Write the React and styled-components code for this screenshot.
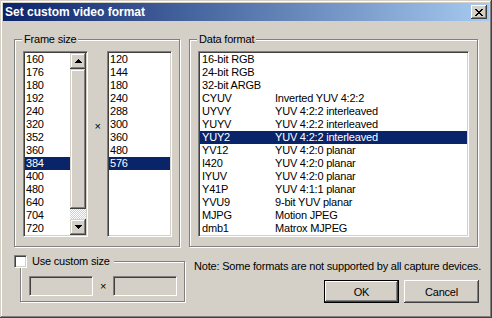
import React from 'react'
import styled, { createGlobalStyle } from 'styled-components'

const GlobalStyle = createGlobalStyle`
  html, body {
    margin: 0;
    padding: 0;
    background: #d4d0c8;
  }

  body {
    font-family: "Liberation Sans", Arial, sans-serif;
    font-size: 11px;
    letter-spacing: -0.2px;
    color: #000;
  }
`

const raised = `
  box-shadow: inset -1px -1px #404040, inset 1px 1px #d4d0c8,
    inset -2px -2px #808080, inset 2px 2px #fff;
`

const sunken = `
  border: 1px solid;
  border-color: #808080 #fff #fff #808080;
  box-shadow: inset 1px 1px #404040, inset -1px -1px #d4d0c8;
`

const Window = styled.div`
  box-sizing: border-box;
  width: 492px;
  height: 318px;
  padding: 3px;
  background: #d4d0c8;
  display: flex;
  flex-direction: column;
  ${raised}
`

const TitleBar = styled.div`
  height: 18px;
  display: flex;
  align-items: center;
  justify-content: space-between;
  padding: 0 2px;
  background: linear-gradient(to right, #0a246a, #a6caf0);
  color: #fff;
  font-weight: bold;
  font-size: 12px;
  letter-spacing: 0;
`

const CloseButton = styled.div`
  box-sizing: border-box;
  width: 16px;
  height: 14px;
  display: flex;
  align-items: center;
  justify-content: center;
  background: #d4d0c8;
  box-shadow: inset -1px -1px #404040, inset 1px 1px #fff,
    inset -2px -2px #808080, inset 2px 2px #d4d0c8;
`

const Body = styled.div`
  flex: 1;
  display: flex;
  flex-direction: column;
  padding: 18px 0 0 11px;
`

const TopRow = styled.div`
  display: flex;
  gap: 9px;
`

const Group = styled.div`
  position: relative;
  box-sizing: border-box;
  width: ${p => p.$w}px;
  height: ${p => p.$h}px;
  border: 1px solid #808080;
  box-shadow: 1px 1px 0 #fff, inset 1px 1px 0 #fff;
  padding: ${p => p.$pad};
  display: flex;
  align-items: flex-start;
`

const Legend = styled.span`
  position: absolute;
  top: -7px;
  left: 7px;
  padding: 0 2px;
  line-height: 13px;
  background: #d4d0c8;
`

const ListBox = styled.div`
  box-sizing: border-box;
  width: ${p => p.$w}px;
  height: 186px;
  padding: 1px;
  background: #fff;
  display: flex;
  ${sunken}
`

const Items = styled.div`
  flex: 1;
  min-width: 0;
`

const Row = styled.div`
  height: 13px;
  line-height: 13px;
  padding-left: ${p => p.$indent}px;
  white-space: nowrap;
  background: ${p => (p.$selected ? '#0a246a' : 'transparent')};
  color: ${p => (p.$selected ? '#fff' : '#000')};
`

const FormatRow = styled(Row)`
  display: grid;
  grid-template-columns: 73px 1fr;
`

const ScrollBar = styled.div`
  width: 16px;
  display: flex;
  flex-direction: column;
`

const ScrollButton = styled.div`
  height: 16px;
  display: flex;
  align-items: center;
  justify-content: center;
  background: #d4d0c8;
  ${raised}
`

const Thumb = styled.div`
  height: 140px;
  background: #d4d0c8;
  ${raised}
`

const Track = styled.div`
  flex: 1;
  background-image: conic-gradient(#fff 25%, #d4d0c8 0 50%, #fff 0 75%, #d4d0c8 0);
  background-size: 2px 2px;
`

const Times = styled.span`
  width: ${p => p.$w}px;
  text-align: center;
  line-height: 13px;
  margin-top: ${p => p.$top}px;
`

const BottomRow = styled.div`
  display: flex;
  margin-top: 8px;
`

const CustomSection = styled.div`
  width: 171px;
`

const CustomGroup = styled(Group)`
  margin: 6px 0 0 6px;
  padding: 9px 0 0 8px;
  align-items: center;
`

const CheckLegend = styled.label`
  position: absolute;
  top: -7px;
  left: -7px;
  display: flex;
  align-items: center;
  gap: 5px;
  padding-right: 4px;
  line-height: 13px;
  background: #d4d0c8;
`

const CheckBox = styled.span`
  box-sizing: border-box;
  width: 13px;
  height: 13px;
  background: #fff;
  ${sunken}
`

const Edit = styled.div`
  box-sizing: border-box;
  width: 64px;
  height: 20px;
  background: #d4d0c8;
  ${sunken}
`

const RightSection = styled.div`
  flex: 1;
  margin-left: 9px;
  display: flex;
  flex-direction: column;
`

const Note = styled.div`
  margin-top: 5px;
  line-height: 13px;
  white-space: nowrap;
`

const Buttons = styled.div`
  display: flex;
  justify-content: flex-end;
  gap: 5px;
  margin-top: 7px;
  padding-right: 10px;
`

const Button = styled.button`
  box-sizing: border-box;
  width: 75px;
  height: 23px;
  padding: 0;
  font: inherit;
  letter-spacing: inherit;
  color: #000;
  background: #d4d0c8;
  border: ${p => (p.$default ? '1px solid #000' : 'none')};
  box-shadow: inset -1px -1px #404040, inset 1px 1px #fff,
    inset -2px -2px #808080, inset 2px 2px #d4d0c8;
`

const PixelIcon = ({ rows }) => (
  <svg width={rows[0].length} height={rows.length} shapeRendering='crispEdges'>
    {rows.map((r, y) =>
      r.split('').map((c, x) =>
        c === '#' ? <rect key={`${x}-${y}`} x={x} y={y} width='1' height='1' fill='#000' /> : null
      )
    )}
  </svg>
)

const closeGlyph = [
  '##....##',
  '.##..##.',
  '..####..',
  '...##...',
  '..####..',
  '.##..##.',
  '##....##'
]

const upGlyph = ['...#...', '..###..', '.#####.', '#######']
const downGlyph = [...upGlyph].reverse()

const frameWidths = ['160', '176', '180', '192', '240', '320', '352', '360', '384', '400', '480', '640', '704', '720']
const frameHeights = ['120', '144', '180', '240', '288', '300', '360', '480', '576']
const formats = [
  ['16-bit RGB', ''],
  ['24-bit RGB', ''],
  ['32-bit ARGB', ''],
  ['CYUV', 'Inverted YUV 4:2:2'],
  ['UYVY', 'YUV 4:2:2 interleaved'],
  ['YUYV', 'YUV 4:2:2 interleaved'],
  ['YUY2', 'YUV 4:2:2 interleaved'],
  ['YV12', 'YUV 4:2:0 planar'],
  ['I420', 'YUV 4:2:0 planar'],
  ['IYUV', 'YUV 4:2:0 planar'],
  ['Y41P', 'YUV 4:1:1 planar'],
  ['YVU9', '9-bit YUV planar'],
  ['MJPG', 'Motion JPEG'],
  ['dmb1', 'Matrox MJPEG']
]

const App = () => {
  return (
    <>
      <GlobalStyle />
      <Window>
        <TitleBar>
          <span>Set custom video format</span>
          <CloseButton>
            <PixelIcon rows={closeGlyph} />
          </CloseButton>
        </TitleBar>

        <Body>
          <TopRow>
            <Group $w={166} $h={208} $pad='11px 0 0 8px'>
              <Legend>Frame size</Legend>
              <ListBox $w={65}>
                <Items>
                  {frameWidths.map(w => (
                    <Row key={w} $indent={1} $selected={w === '384'}>{w}</Row>
                  ))}
                </Items>
                <ScrollBar>
                  <ScrollButton><PixelIcon rows={upGlyph} /></ScrollButton>
                  <Thumb />
                  <Track />
                  <ScrollButton><PixelIcon rows={downGlyph} /></ScrollButton>
                </ScrollBar>
              </ListBox>
              <Times $w={19} $top={69}>×</Times>
              <ListBox $w={65}>
                <Items>
                  {frameHeights.map(h => (
                    <Row key={h} $indent={1} $selected={h === '576'}>{h}</Row>
                  ))}
                </Items>
              </ListBox>
            </Group>

            <Group $w={289} $h={208} $pad='11px 0 0 8px'>
              <Legend>Data format</Legend>
              <ListBox $w={271}>
                <Items>
                  {formats.map(([code, desc]) => (
                    <FormatRow key={code} $indent={2} $selected={code === 'YUY2'}>
                      <span>{code}</span>
                      <span>{desc}</span>
                    </FormatRow>
                  ))}
                </Items>
              </ListBox>
            </Group>
          </TopRow>

          <BottomRow>
            <CustomSection>
              <CustomGroup $w={165} $h={41}>
                <CheckLegend>
                  <CheckBox />
                  Use custom size
                </CheckLegend>
                <Edit />
                <Times $w={20} $top={0}>×</Times>
                <Edit />
              </CustomGroup>
            </CustomSection>

            <RightSection>
              <Note>Note: Some formats are not supported by all capture devices.</Note>
              <Buttons>
                <Button $default>OK</Button>
                <Button>Cancel</Button>
              </Buttons>
            </RightSection>
          </BottomRow>
        </Body>
      </Window>
    </>
  )
}

export default App
